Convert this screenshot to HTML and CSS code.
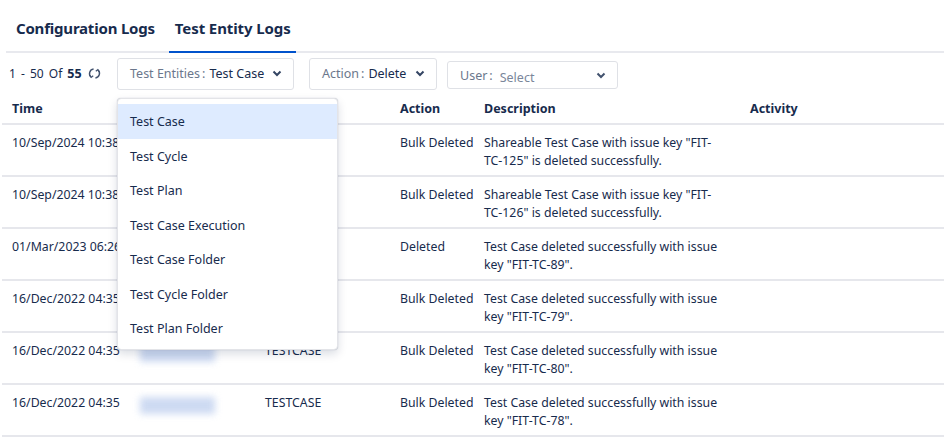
FILE: index.html
```html
<!DOCTYPE html>
<html>
<head>
<meta charset="utf-8">
<link rel="stylesheet" href="styles.css">
</head>
<body>
<div class="page">
  <div class="tabs">
    <div class="tab">Configuration Logs</div>
    <div class="tab active">Test Entity Logs</div>
  </div>
  <div class="toolbar">
    <div class="count">1 - 50 Of <b>55</b>
      <svg class="refresh" width="13" height="13" viewBox="0 0 14 14"><path d="M6 2.2 A5 5 0 0 0 3.2 10.8" fill="none" stroke="#42526e" stroke-width="1.5"/><path d="M1.6 8.6 L3.4 11.2 L5.6 9.4" fill="none" stroke="#42526e" stroke-width="1.4"/><path d="M8 11.8 A5 5 0 0 0 10.8 3.2" fill="none" stroke="#42526e" stroke-width="1.5"/><path d="M12.4 5.4 L10.6 2.8 L8.4 4.6" fill="none" stroke="#42526e" stroke-width="1.4"/></svg>
    </div>
    <div class="select sel-entity"><span class="lbl">Test Entities</span><span class="colon">:</span><span class="val">Test Case</span><svg class="chev" width="10" height="7" viewBox="0 0 10 7"><path d="M1.5 1.5 L5 5 L8.5 1.5" fill="none" stroke="#344563" stroke-width="2"/></svg></div>
    <div class="select sel-action"><span class="lbl">Action</span><span class="colon">:</span><span class="val">Delete</span><svg class="chev" width="10" height="7" viewBox="0 0 10 7"><path d="M1.5 1.5 L5 5 L8.5 1.5" fill="none" stroke="#344563" stroke-width="2"/></svg></div>
    <div class="select sel-user"><span class="lbl">User</span><span class="colon">:</span><span class="ph">Select</span><svg class="chev" width="10" height="7" viewBox="0 0 10 7"><path d="M1.5 1.5 L5 5 L8.5 1.5" fill="none" stroke="#42526e" stroke-width="2"/></svg></div>
  </div>
  <div class="table">
    <div class="row head">
      <div class="c time">Time</div><div class="c user"></div><div class="c ent"></div><div class="c act">Action</div><div class="c desc">Description</div><div class="c activity">Activity</div>
    </div>
    <div class="row">
      <div class="c time">10/Sep/2024 10:38</div><div class="c user"><span class="blur"></span></div><div class="c ent">TESTCASE</div><div class="c act">Bulk Deleted</div><div class="c desc">Shareable Test Case with issue key "FIT-TC-125" is deleted successfully.</div><div class="c activity"></div>
    </div>
    <div class="row">
      <div class="c time">10/Sep/2024 10:38</div><div class="c user"><span class="blur"></span></div><div class="c ent">TESTCASE</div><div class="c act">Bulk Deleted</div><div class="c desc">Shareable Test Case with issue key "FIT-TC-126" is deleted successfully.</div><div class="c activity"></div>
    </div>
    <div class="row">
      <div class="c time">01/Mar/2023 06:26</div><div class="c user"><span class="blur"></span></div><div class="c ent">TESTCASE</div><div class="c act">Deleted</div><div class="c desc">Test Case deleted successfully with issue key "FIT-TC-89".</div><div class="c activity"></div>
    </div>
    <div class="row">
      <div class="c time">16/Dec/2022 04:35</div><div class="c user"><span class="blur"></span></div><div class="c ent">TESTCASE</div><div class="c act">Bulk Deleted</div><div class="c desc">Test Case deleted successfully with issue key "FIT-TC-79".</div><div class="c activity"></div>
    </div>
    <div class="row">
      <div class="c time">16/Dec/2022 04:35</div><div class="c user"><span class="blur"></span></div><div class="c ent">TESTCASE</div><div class="c act">Bulk Deleted</div><div class="c desc">Test Case deleted successfully with issue key "FIT-TC-80".</div><div class="c activity"></div>
    </div>
    <div class="row">
      <div class="c time">16/Dec/2022 04:35</div><div class="c user"><span class="blur"></span></div><div class="c ent">TESTCASE</div><div class="c act">Bulk Deleted</div><div class="c desc">Test Case deleted successfully with issue key "FIT-TC-78".</div><div class="c activity"></div>
    </div>
  </div>
  <div class="menu">
    <div class="item sel">Test Case</div>
    <div class="item">Test Cycle</div>
    <div class="item">Test Plan</div>
    <div class="item">Test Case Execution</div>
    <div class="item">Test Case Folder</div>
    <div class="item">Test Cycle Folder</div>
    <div class="item">Test Plan Folder</div>
  </div>
</div>
</body>
</html>
```
FILE: styles.css
```css
* { box-sizing: border-box; }
body {
  margin: 0;
  background: #fff;
  font-family: "Noto Sans", "Open Sans", sans-serif;
  font-size: 12.3px;
  color: #172b4d;
}
.page { position: relative; width: 944px; height: 440px; overflow: hidden; }
.tabs {
  display: flex;
  margin-left: 6px;
  padding-top: 14px;
  border-bottom: 2px solid #e8e9ee;
  height: 53px;
}
.tab {
  font-size: 15px;
  font-weight: 700;
  color: #172b4d;
  padding: 0 10px;
  height: 37px;
  line-height: 29px;
  letter-spacing: -0.2px;
}
.tab.active { border-bottom: 2px solid #0052cc; height: 39px; margin-left: 4px; padding: 0 5px 0 6px; letter-spacing: -0.1px; }
.toolbar {
  display: flex;
  align-items: center;
  height: 39px;
  padding-left: 9px;
  padding-top: 2px;
}
.count { display: flex; align-items: center; gap: 5px; font-size: 12px; word-spacing: 2px; color: #172b4d; width: 108px; }
.count b { font-weight: 700; font-size: 12.5px; }
.refresh { margin-left: 1px; }
.select {
  display: flex;
  align-items: center;
  height: 32px;
  border: 1px solid #dfe1e6;
  border-radius: 3px;
  padding: 0 11px 0 12px;
  font-size: 12.5px;
}
.lbl { color: #6b778c; }
.colon { color: #6b778c; margin: 0 4px 0 2px; }
.val { color: #172b4d; }
.ph { color: #7a869a; margin-left: 3px; position: relative; top: 2px; }
.chev { margin-left: auto; }
.sel-entity { width: 177px; }
.sel-action { width: 128px; margin-left: 15px; }
.sel-user { width: 171px; margin-left: 10px; height: 28px; margin-top: 3px; }
.row {
  display: flex;
  height: 52px;
  border-bottom: 2px solid #e6e7ec;
  margin-left: 2px;
  line-height: 18px;
}
.row .c { padding-top: 9px; }
.row.head { height: 33px; font-weight: 700; font-size: 12.5px; }
.row.head .c { padding-top: 8px; }
.c.time { width: 138px; padding-left: 10px; white-space: nowrap; overflow: hidden; }
.c.user { width: 125px; }
.c.ent { width: 135px; }
.c.act { width: 84px; }
.c.desc { width: 266px; padding-right: 26px; }
.c.activity { flex: 1; }
.blur {
  display: block;
  width: 75px;
  height: 17px;
  margin-top: 3px;
  background: #c5d4f0;
  filter: blur(3.5px);
  opacity: 0.85;
}
.menu {
  position: absolute;
  left: 117px;
  top: 98px;
  width: 221px;
  height: 252px;
  background: #fff;
  border: 1px solid #e3e4e8;
  border-radius: 4px;
  box-shadow: 0 4px 10px rgba(9, 30, 66, 0.15), 0 0 1px rgba(9, 30, 66, 0.3);
  padding: 5px 0;
}
.item {
  height: 34.5px;
  line-height: 36px;
  padding-left: 12px;
  font-size: 12.5px;
  color: #172b4d;
}
.item.sel { background: #deebff; }
```
